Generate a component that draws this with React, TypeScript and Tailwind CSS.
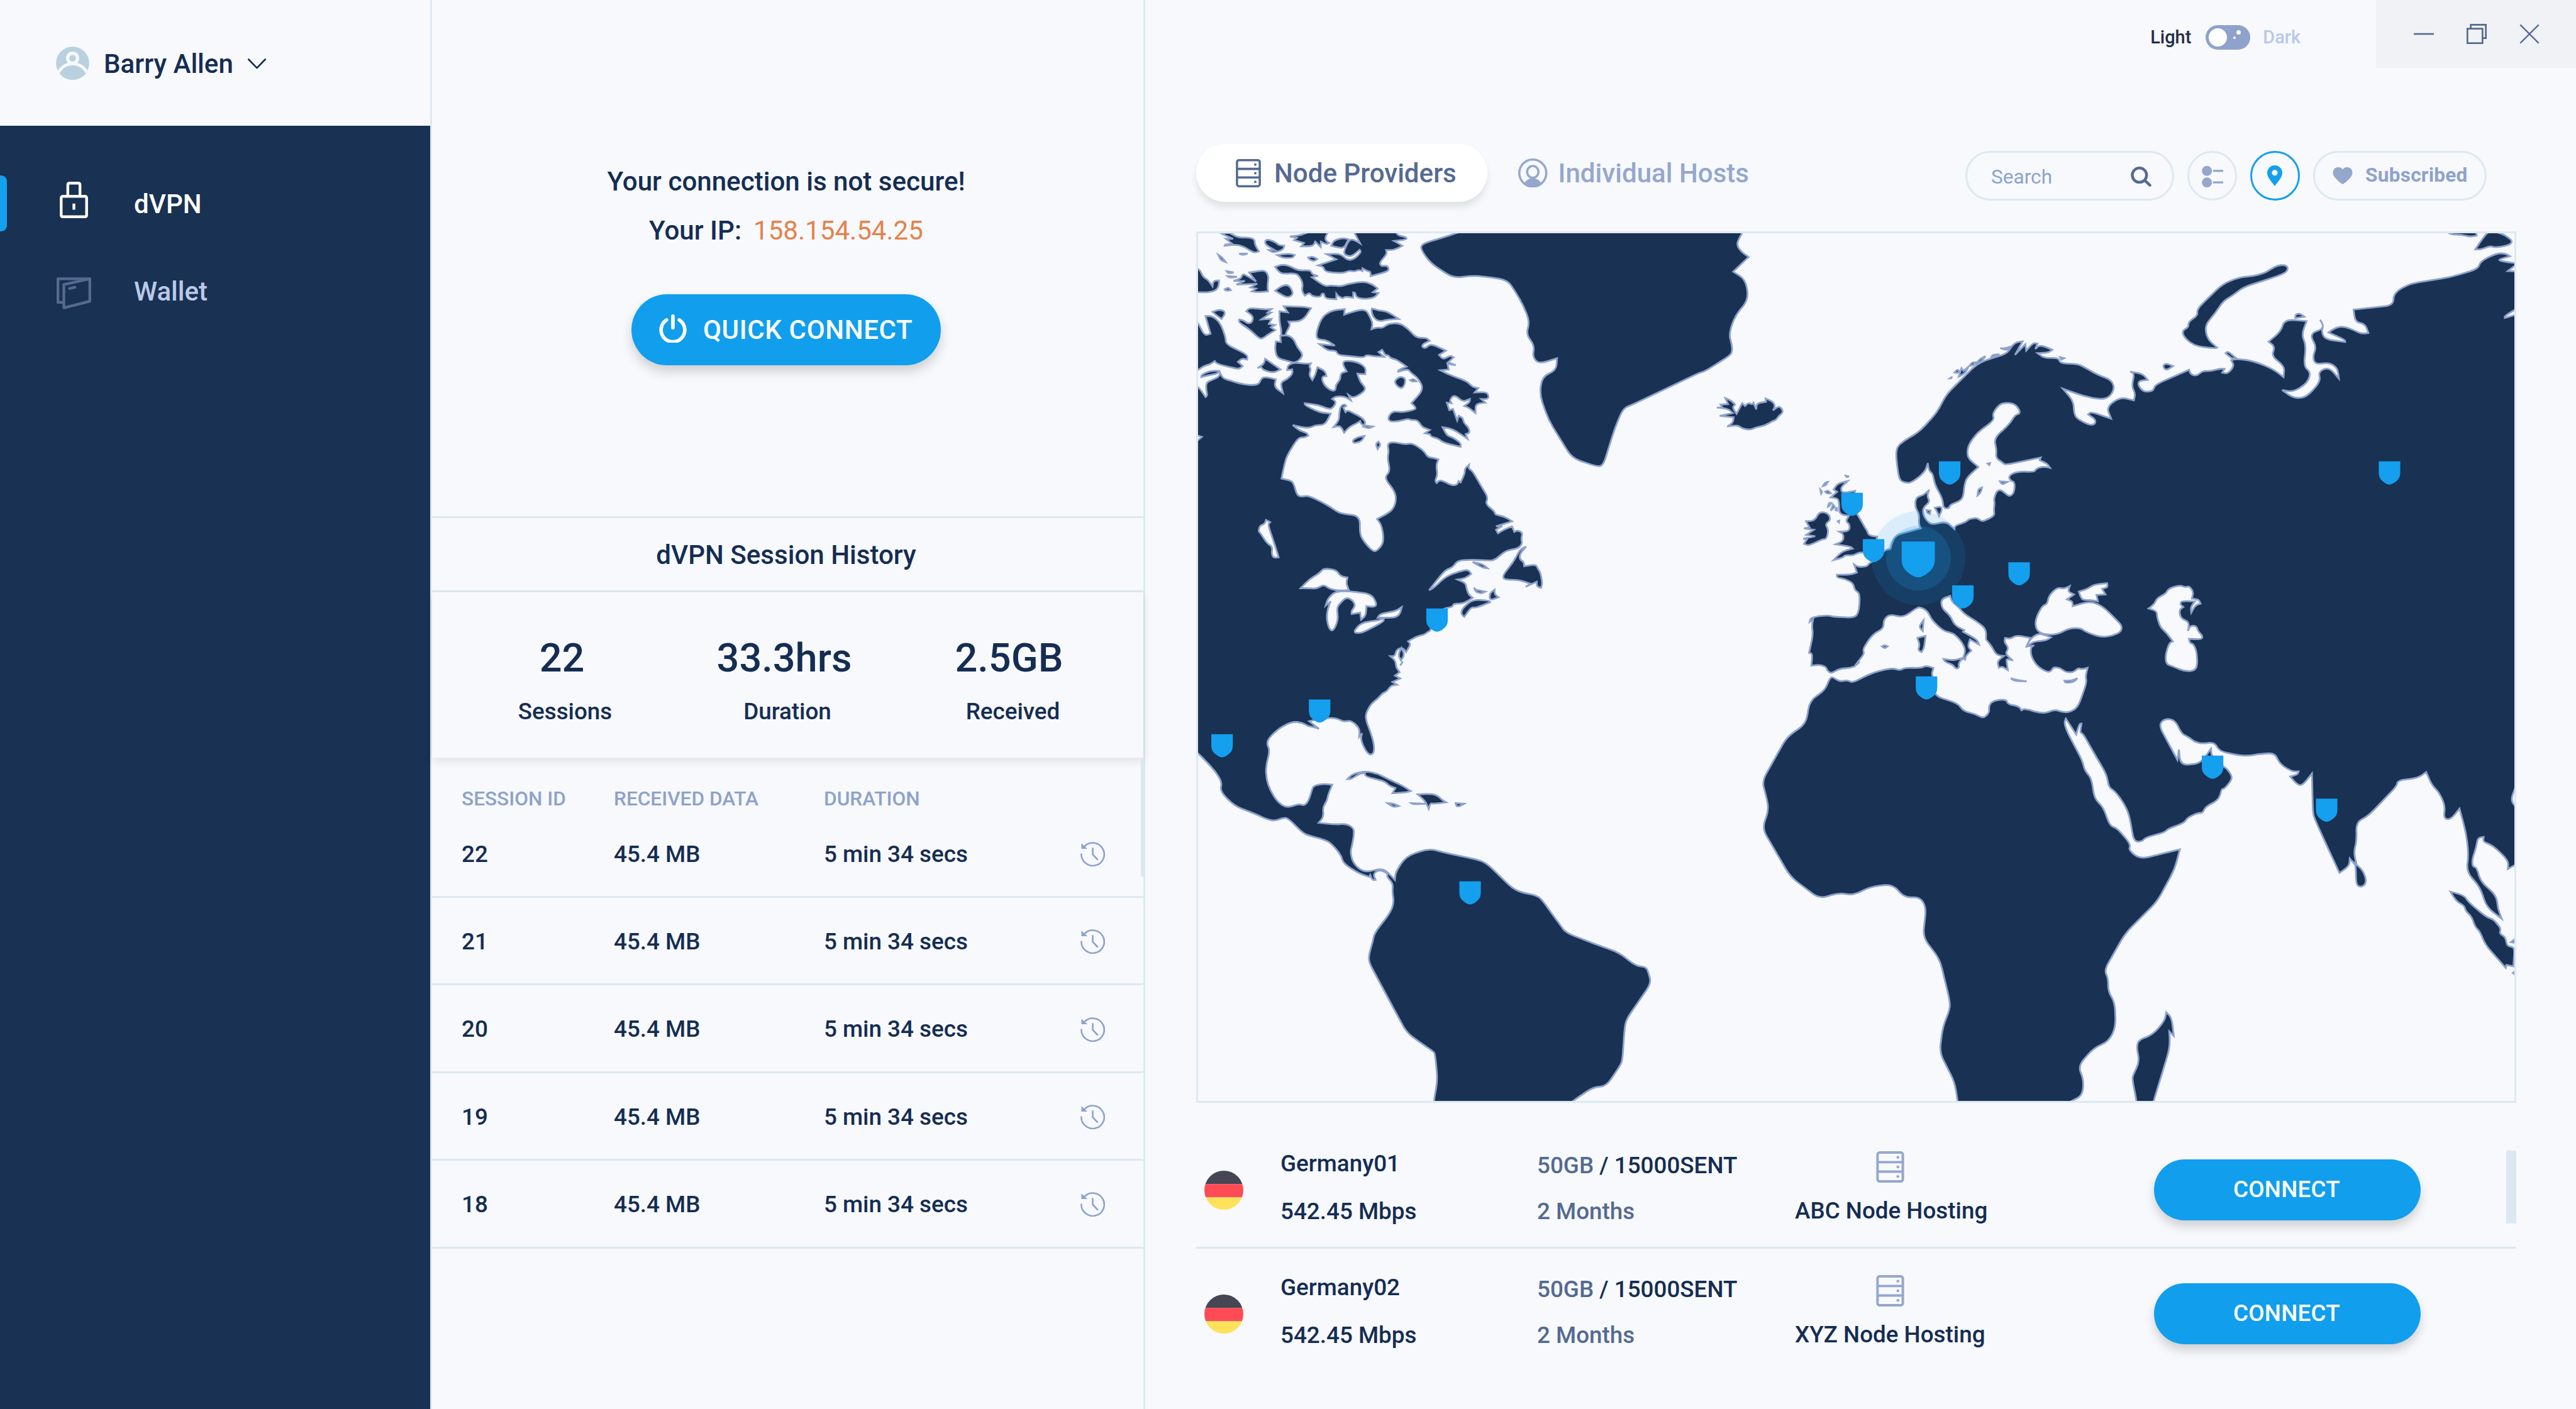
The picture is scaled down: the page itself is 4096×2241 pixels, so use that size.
import React from "react";

/* ---------- map geometry ---------- */

type Pt = [number, number];
type Sheet = (s: string) => Pt[];

// Coastlines are digitised sheet by sheet; each sheet has its own origin and scale.
const sheet =
  (ox: number, oy: number, sx: number, sy: number): Sheet =>
  (s) =>
    s
      .trim()
      .split(/\s+/)
      .map((p) => {
        const [x, y] = p.split(",").map(Number);
        return [ox + x * sx, oy + y * sy] as Pt;
      });

const A = sheet(2160, 410, 0.5102, 0.5102);
const B = sheet(2160, 1200, 0.574, 0.5166);
const C = sheet(3080, 410, 0.5102, 0.5102);
const D = sheet(3780, 410, 0.5102, 0.5102);
const E = sheet(3080, 1150, 0.5485, 0.5485);
const F = sheet(3720, 1150, 0.5485, 0.5485);

// Closed outline; gentle bends are rounded, sharp corners stay sharp.
const outline = (...parts: Pt[][]): string => {
  const pts = parts.flat();
  const n = pts.length;
  let d = "";
  for (let i = 0; i < n; i++) {
    const a = pts[(i + n - 1) % n];
    const p = pts[i];
    const b = pts[(i + 1) % n];
    const la = Math.hypot(a[0] - p[0], a[1] - p[1]) || 1;
    const lb = Math.hypot(b[0] - p[0], b[1] - p[1]) || 1;
    const dot = ((p[0] - a[0]) * (b[0] - p[0]) + (p[1] - a[1]) * (b[1] - p[1])) / (la * lb);
    const cmd = i === 0 ? "M" : "L";
    if (dot > 0.05) {
      const ra = Math.min(la * 0.48, 16) / la;
      const rb = Math.min(lb * 0.48, 16) / lb;
      const s = [p[0] + (a[0] - p[0]) * ra, p[1] + (a[1] - p[1]) * ra];
      const e = [p[0] + (b[0] - p[0]) * rb, p[1] + (b[1] - p[1]) * rb];
      d += `${cmd}${s[0].toFixed(1)} ${s[1].toFixed(1)}Q${p[0].toFixed(1)} ${p[1].toFixed(1)} ${e[0].toFixed(1)} ${e[1].toFixed(1)}`;
    } else {
      d += `${cmd}${p[0].toFixed(1)} ${p[1].toFixed(1)}`;
    }
  }
  return d + "Z";
};

const americas = outline(
  A(`-20,545 23,568 50,608 57,603 52,580 53,555 80,545 98,535 102,522 112,542 140,550 170,560 210,566 240,563 248,542 262,536 300,545
  294,572 326,595 318,565 322,553 340,545 360,525 358,510 340,512 343,495 365,485 405,490 425,488 418,500 425,508 418,530 430,548 440,530 448,502
  475,515 480,534 468,534 463,545 475,570 500,587 513,583 513,565 530,545 530,523 552,517 537,490 545,478 590,483 620,503 618,527
  590,525 600,555 620,575 610,592 575,612 558,600 567,620 548,608 530,605 510,607 500,615 515,625 505,645 490,652 450,635 403,630
  403,637 440,655 460,663 495,667 480,698 465,708 440,708 415,720 360,708 385,728 410,735 415,745 400,752 380,752 340,815 330,850
  320,898 355,905 365,920 375,957 392,963 415,958 470,985 500,1003 528,1023 600,1030 598,1095 615,1125 645,1157 660,1155 685,1125
  677,1065 660,1042 705,1018 722,998 728,970 722,942 685,895 707,872 697,828 702,800 697,775 715,767 760,777 785,772 825,798
  840,822 860,824 878,830 870,850 875,885 866,905 872,914 885,901 925,923 945,920 950,907 957,912 972,880 972,862 987,849
  985,862 1000,872 1030,925 1055,965 1045,988 1078,1015 1080,1027 1110,1032 1140,1050 1083,1068 1105,1067 1083,1080 1090,1093 1110,1080 1140,1068
  1148,1088 1158,1082 1178,1090 1172,1113 1177,1130 1160,1148 1118,1153 1080,1187 1060,1190 990,1186 945,1190 930,1213 905,1222
  880,1250 845,1295 862,1287 905,1245 965,1225 985,1223 995,1237 975,1252 945,1257 975,1270 977,1285 985,1310 1000,1322 975,1338
  955,1343 932,1343 928,1355 895,1360 860,1395 850,1440 840,1443 830,1452 800,1460 770,1477 780,1487 763,1515 752,1500 730,1505 723,1530
  707,1530 725,1545 728,1568`),
  B(`650,25 658,38 643,50 660,60 635,72 650,82 630,85 618,105 603,112 590,130 568,148 550,185 553,212 565,245 577,290
  577,320 565,330 550,313 535,275 539,252 530,265 532,235 505,207 480,212 465,202 440,197 395,204 372,210 388,224 403,237 385,230 370,228 350,215 320,211
  280,232 245,268 238,290 248,312 235,370 237,415 250,455 273,495 302,515 340,500 357,507 370,490 380,455 385,437 415,430
  445,433 432,468 428,490 415,512 418,545 402,567 455,573 490,570 512,585 514,605 508,645 502,670 510,705 530,730 555,740
  600,727 620,740 643,768 645,740 678,685 750,657 800,672 900,695 932,708 1015,798 1045,812 1092,822 1110,840 1135,880
  1165,925 1183,953 1300,1003 1350,1022 1405,1070 1437,1073 1445,1095 1453,1130 1373,1260 1368,1300 1362,1400 1355,1420
  1310,1493 1270,1495 1200,1548 1170,1580 764,1580 766,1545 778,1470 770,1380 765,1370 720,1337 680,1303 655,1252 560,1055
  562,1025 573,985 578,955 630,880 640,845 635,812 637,780 618,757 620,745 600,733 583,737 575,750 582,767 572,768
  565,750 563,757 530,745 480,710 473,680 440,637 417,625 375,613 352,603 305,550 290,549 265,560 240,555 200,535 135,507
  90,455 97,425 75,385 45,350 22,323 -20,290`),
);

const greenland = outline(
  A(`970,15 920,33 820,63 815,82 850,132 932,185 1000,176 1050,180 1123,192 1150,230 1180,282 1203,340 1190,385 1220,425
  1213,465 1235,490 1300,470 1297,513 1247,535 1238,600 1270,690 1353,825 1435,853 1463,855 1505,720 1535,648 1568,635`),
  C(`0,523 25,515 112,460 120,445 118,420 108,385 128,322 178,260 167,190 123,162 178,110 150,90 138,70 138,55 160,15`),
);

const eurasiaAfrica = outline(
  E(`438,132 425,120 422,110 403,102 373,105`),
  C(`405,1520 393,1518 407,1455 403,1420 407,1400 395,1408 398,1395 425,1387 465,1385 480,1390 555,1393 568,1375 573,1340
  572,1305 555,1295 550,1270 520,1255 492,1250 492,1240 540,1240 563,1232 553,1203 568,1213 600,1210 605,1200 625,1190 665,1150
  683,1150 685,1133 700,1100 745,1087 790,1075 783,1060 785,1025 770,1000 772,965 800,957 820,938 812,960 823,980 800,1000 797,1020
  808,1045 830,1063 880,1050 910,1078 912,1065 950,1053 960,1043 990,1037 1005,1050 1020,1047 1053,1030 1050,1010 1053,985 1050,970
  1060,942 1075,938 1090,950 1105,962 1122,950 1125,910 1107,905 1103,887 1135,872 1195,875 1200,863 1225,855 1250,860 1240,845 1213,833
  1217,823 1090,850 1080,840 1057,825 1060,795 1050,755 1105,705 1125,672 1143,667 1140,650 1120,630 1080,628 1060,645 1045,670 1052,690
  990,735 960,778 955,805 960,828 995,857 955,893 945,920 942,960 930,978 895,990 890,1005 870,1003 868,970 840,920 833,880
  820,872 815,843 805,875 757,913 735,913 713,903 702,820 705,785 735,760 785,732 850,660 880,600 920,560 990,490 1040,470
  1095,455 1115,425 1130,413 1152,410 1125,458 1162,420 1165,443 1190,415 1205,418 1197,437 1215,422 1258,440 1245,450 1205,452 1230,470 1280,468 1285,488
  1340,490 1360,495 1420,530 1465,545 1480,575 1462,608 1430,617 1370,605 1295,578 1333,622 1335,665 1345,685 1390,708 1410,705 1412,688
  1385,670 1395,660 1467,685 1450,643 1500,608 1548,620 1553,595 1540,570 1550,525 1535,518`),
  D(`207,525 225,547 195,550 190,565 210,590 245,587 250,565 372,511 378,528 400,533 420,515 450,516 480,507 498,508 490,521
  510,525 533,497 522,477 545,472 600,480 670,508 708,537 712,498 665,463 678,430 655,411 698,375 712,332 790,338 772,387 788,423
  780,500 805,520 793,558 743,590 703,583 735,607 765,613 795,603 840,552 832,517 870,502 905,543 900,505 870,485 820,492 812,463
  825,430 805,393 815,377 842,368 850,355 838,333 850,352 843,378 857,403 927,412 928,405 868,378 895,360 925,357 965,373 985,383 1010,380 997,347 963,341 957,297 1098,282
  1100,238 1155,205 1300,182 1400,152 1408,125 1465,97 1495,97 1513,107 1475,118 1475,124 1540,133 1505,160 1600,165`),
  F(`1600,500 1540,500 1532,515 1520,548 1532,570 1600,620 1600,740 1532,765 1510,778 1512,750 1460,700 1428,688 1430,672 1410,675 1405,708
  1392,745 1393,770 1407,773 1420,820 1472,865 1477,910 1490,943 1440,905 1418,838 1373,787 1380,730 1372,660 1350,578 1320,615
  1297,610 1303,570 1283,525 1258,500 1240,457 1212,477 1145,485 1143,503 1047,603 1008,623 1010,685 1000,722 1010,765 1003,762 987,743 985,768
  953,791 920,720 870,610 865,590 862,462 832,500 815,500 790,472 815,465 818,455 795,455 755,430 740,395 700,396 645,404
  610,400 555,388 540,358 500,363 475,358 455,342 430,330 410,285 375,280 355,302 417,417 422,383 427,433 475,432 500,420 528,380
  530,405 570,440 580,445 597,470 595,485 572,513 563,512 555,548 510,572 500,593 485,592 450,608 440,625 385,645 375,657
  312,673 300,687 273,688 258,600 240,560 210,520 190,508 183,465 150,410 105,330 95,327 100,297 93,297 82,333 48,280
  42,295 55,330 103,420 110,452 133,478 142,545 172,573 193,635 218,643 263,697 255,715 293,745 425,713 408,778 350,885
  245,990 175,1112 188,1140 188,1183 210,1220 213,1300 190,1348 140,1370 88,1430 107,1475 103,1528 60,1548 20,1580`),
  E(`860,1580 857,1545 847,1483 797,1385 808,1300 832,1240 830,1210 798,1077 742,1003 753,905 732,870 680,873 643,828
  570,836 510,865 465,856 400,877 303,803 210,643 233,582 222,530 210,487 293,340 355,298 368,220 418,187 433,148 443,142
  465,158 492,153 510,162 560,135 600,122 643,113 665,121 683,112 735,113 753,105 777,113 770,135 785,170 780,205 858,230 875,255
  915,265 942,280 962,260 960,240 970,224 1000,217 1020,220 1022,232 1060,240 1068,253 1078,247 1140,265 1178,250 1200,258
  1225,260 1255,243 1284,160 1280,140 1287,112 1268,117 1255,113 1240,127 1215,127 1195,112 1173,110 1165,125 1150,125 1120,107
  1100,75 1098,45 1110,38 1085,42`),
  C(`1180,1465 1130,1455 1110,1468 1090,1465 1087,1480 1103,1500 1090,1522 1118,1545 1097,1540`),
  E(`1018,87 1023,120 1005,108 993,112 988,90 1010,73 985,70 970,42 952,20`),
  C(`1022,1470 1023,1435 995,1410 945,1380 925,1355 900,1335 895,1315 862,1327 865,1360 895,1385 910,1420 945,1437 940,1443
  990,1470 997,1488 965,1470 957,1495 970,1510 950,1528 948,1542 940,1538 950,1508 935,1478 920,1462 905,1448 870,1440 828,1400 815,1370 790,1355 775,1358 728,1393
  680,1380 658,1400 658,1432 620,1450 583,1505 590,1520 570,1545 553,1568`),
  E(`533,92 512,112 465,115`),
);

const islands: string[] = [
  // Baffin
  outline(A(`445,373 465,322 500,300 545,295 543,315 600,297 622,300 632,318 645,345 640,367 660,360 680,363 700,347 740,345 770,365
  800,398 835,397 847,408 822,420 820,430 833,435 850,418 905,443 880,458 895,475 920,460 932,467 912,485 940,495 910,490 915,510
  885,513 920,530 980,552 1000,573 1020,576 1007,592 1045,590 1057,600 1055,615 1030,615 1045,628 1010,632 1010,665 985,645 970,640
  990,625 990,615 965,625 945,607 930,603 918,620 925,630 908,628 917,655 930,650 945,692 950,675 965,682 968,700 985,715 990,735 975,740
  982,757 930,722 893,715 908,745 930,752 958,772 957,785 895,770 880,757 850,748 850,740 830,737 848,725 820,715 805,690 780,690
  770,685 735,695 705,695 698,682 715,658 750,663 795,653 798,645 782,630 827,580 805,540 780,522 770,508 735,518 735,512 765,500
  730,475 708,470 700,458 690,460 678,440 665,448 685,465 650,463 620,458 615,468 560,462 520,458 515,443 485,443 455,420 510,425 490,412
  475,405 445,402`)),
  outline(A(`642,293 665,300 695,303 737,330 700,332 665,340 645,322 640,300`)),
  outline(A(`298,145 320,137 345,140 380,158 415,157 425,160 430,172 450,177 428,182 475,215 495,210 530,215 560,205 610,197 640,205
  662,222 645,235 665,238 650,255 610,260 585,252 583,237 575,236 575,255 545,250 540,258 523,250 515,240 515,260 475,258 472,240 463,240
  460,252 430,250 420,237 403,247 392,230 397,205 385,180 370,167 325,170 310,162`)),
  outline(A(`350,37 390,33 430,15 490,15 475,40 478,52 490,60 480,65 460,55 460,75 440,55 432,72 390,72 400,60 365,50 375,42`)),
  // Ellesmere
  outline(A(`575,15 600,62 578,48 560,48 541,92 548,104 570,108 598,84 604,92 580,117 555,122 530,98 480,100 515,118 450,140 470,145 475,163 540,168 560,158 580,162 595,155 608,160
  608,150 625,160 637,162 637,178 685,165 703,157 697,140 675,143 668,130 695,100 692,85 720,85 750,70 720,53 765,48 765,40 730,32 730,15`)),
  outline(A(`497,70 507,50 540,42 558,47 543,78 520,76`)),
  outline(A(`315,15 120,15 165,42 205,40 225,48 225,65 240,90 225,95 205,85 185,72 155,65 118,70 120,64 148,65 122,45 148,45 118,32 105,25`)),
  outline(A(`262,50 275,48 300,58 310,68 330,70 325,85 290,95 275,85 295,85 262,65`)),
  outline(A(`305,103 345,98 367,103 360,113 325,113`)),
  outline(A(`415,112 430,108 447,117 438,125 420,120`)),
  outline(A(`95,102 108,110 122,128 105,122`)),
  outline(A(`170,98 200,98 180,103`)),
  outline(A(`-10,150 28,150 40,180 60,192 75,215 78,195 98,193 97,215 85,230 50,237 -10,232`)),
  outline(A(`125,160 150,165 130,168`)),
  outline(A(`128,178 162,180 135,184`)),
  outline(A(`205,165 240,160 262,158 275,178 270,208 272,232 235,235 215,232 230,222 210,218 234,205 160,208 190,195 150,195 178,185 180,172 190,172 230,197`)),
  outline(A(`118,225 132,218 140,228 122,230`)),
  outline(A(`298,230 320,213 345,208 362,235 355,250 335,253`)),
  outline(A(`75,305 95,298 115,300 120,312 107,330 90,318`)),
  outline(A(`195,303 207,290 260,297 285,295 270,308 283,308 248,332 285,330 275,348 297,352 282,360 298,370 270,387 250,402 235,395 210,370
  168,342 170,332 185,335 200,347 215,343 220,325 210,313`)),
  outline(A(`328,285 400,287 425,292 395,338 345,340 352,352 333,385 340,390 318,402 320,370 313,340 313,303 343,307`)),
  outline(A(`316,390 318,412 300,410 297,440 305,470 345,480 370,488 400,460 375,430 365,403 345,388`)),
  outline(A(`262,472 317,510 290,522 255,512 248,500 235,505 258,490`)),
  outline(A(`720,553 740,535 760,540 760,560 750,577 735,573`)),
  outline(A(`778,548 790,543 800,552 785,553`)),
  outline(A(`573,762 592,750 615,747 605,765 577,773`)),
  outline(A(`655,775 665,767 673,777 662,793`)),
  outline(A(`35,530 65,515 98,515 92,525 60,530 35,537`)),
  outline(A(`-10,325 23,340 45,390 68,383 50,320 75,320 103,345 122,397 122,420 200,458 198,475 180,470 165,483 182,498 170,508 150,505
  90,490 83,480 65,492 45,497 23,512 -10,530`)),
  outline(A(`545,633 530,640 525,670 525,690 505,715 530,710 543,735 560,715 590,700 600,693 605,708 645,713 630,720 610,713 620,698 605,680
  575,665 555,655 548,662 540,645 550,640`)),
  outline(A(`1190,1140 1168,1150 1145,1195 1108,1240 1110,1258 1165,1258 1205,1272 1188,1283 1228,1265 1228,1282 1243,1287 1248,1270 1240,1230
  1232,1220 1225,1203 1183,1210 1182,1195 1167,1185 1168,1165`)),
  outline(A(`1000,1195 1035,1202 1053,1217 1035,1215`)),
  outline(A(`1005,1285 1008,1293 1045,1300 1030,1307 1010,1300`)),
  outline(A(`958,1378 965,1358 1000,1328 1060,1332 1062,1338 1010,1358 995,1355 970,1390`)),
  outline(A(`1060,1322 1062,1305 1078,1293 1078,1310 1092,1320 1065,1330`)),
  outline(A(`747,1500 758,1525 745,1545 735,1525`)),
  // Caribbean
  outline(B(`493,413 510,395 550,385 590,395 620,413 665,435 693,455 680,460 635,463 645,445 625,437 610,420 550,405 548,392 530,395 505,413`)),
  outline(B(`715,467 760,465 780,473 790,485 805,495 765,500 755,498 750,518 745,505 738,490`)),
  outline(B(`695,498 740,500 700,502`)),
  outline(B(`620,498 640,500 655,508 638,512`)),
  outline(B(`835,498 862,500 845,510 837,508`)),
  outline(B(`660,15 668,0`)),
  // Iceland, Britain, Ireland
  outline(C(`65,645 85,645 78,635 105,633 95,612 115,620 130,635 120,645 135,668 155,630 165,640 178,628 190,635 195,628 205,652 207,630
  240,625 238,613 265,625 272,640 265,655 285,640 297,650 300,663 285,675 275,690 265,692 235,710 205,715 185,725 155,720 140,708 102,713 122,700
  125,680 75,675 122,665 105,650`)),
  outline(C(`530,907 495,915 480,937 493,945 470,965 495,968 500,985 500,1025 535,1030 523,1050 537,1060 537,1085 500,1087 515,1095 515,1120
  487,1132 540,1140 548,1147 510,1157 480,1188 515,1178 520,1170 550,1172 570,1160 620,1162 635,1105 605,1100 600,1085 590,1070 565,1025
  545,1000 557,942 510,950 505,930`)),
  outline(C(`375,1075 395,1072 382,1050 413,1048 430,1015 462,1022 470,1045 450,1060 462,1080 455,1113 440,1113 392,1137 375,1130 385,1115
  372,1112 415,1103 383,1098 410,1080`)),
  outline(C(`442,925 450,912 460,910 452,922`)),
  outline(C(`433,937 440,945 436,952`)),
  outline(C(`450,945 460,940 470,950 458,952`)),
  outline(C(`523,888 535,890 526,893`)),
  outline(C(`460,998 463,985 472,985 466,995`)),
  outline(C(`470,1012 478,990 485,1000 474,1008`)),
  outline(C(`487,1010 492,1000 492,1012`)),
  outline(C(`495,1050 500,1048 499,1054`)),
  // Mediterranean
  outline(C(`783,1425 800,1402 797,1440`)),
  outline(C(`778,1465 790,1462 807,1458 802,1500 793,1515 780,1508 787,1490`)),
  outline(C(`652,1495 662,1490 672,1495 662,1502`)),
  outline(E(`810,83 845,88 878,78 860,95 862,113 850,115 842,103 815,92`)),
  outline(E(`1033,147 1055,153 1085,157 1045,156`)),
  outline(E(`1210,155 1235,155 1253,147 1240,160 1213,162`)),
  // Baltic
  outline(C(`992,958 995,935 1008,930 1003,948`)),
  outline(C(`1072,908 1098,910 1080,920`)),
  outline(C(`1028,845 1036,843 1034,850`)),
  outline(C(`840,1002 862,997 866,1010 855,1032 848,1015`)),
  outline(C(`810,1010 825,1012 822,1024 813,1020`)),
  // Norwegian skerries
  outline(C(`893,542 902,536 898,542`)),
  outline(C(`910,520 920,510 927,515 922,523`)),
  outline(C(`925,535 935,505 942,515 960,500 950,520 935,530`)),
  outline(C(`963,497 972,485 985,485 978,495`)),
  outline(C(`985,492 1000,472 1020,463 1005,482`)),
  outline(C(`1040,468 1045,458 1070,456`)),
  outline(C(`1073,434 1085,436 1112,428 1095,442`)),
  outline(C(`1285,466 1300,470 1290,475`)),
  // Arctic Russia
  outline(D(`685,140 660,155 640,167 600,178 550,182 490,207 400,295 403,318 370,340 370,360 350,370 350,388 375,415 405,428 465,435
  472,432 440,405 430,370 435,345 465,310 493,267 530,245 565,217 665,185 715,167 725,150 715,138`)),
  outline(D(`278,498 290,488 315,498 290,514`)),
  outline(D(`502,452 510,445 540,470 525,472`)),
  outline(D(`750,315 765,310 782,322 750,327`)),
  outline(D(`1280,10 1390,10 1395,34 1370,38 1340,30 1300,30`)),
  outline(D(`1440,15 1415,45 1390,83 1410,83 1443,70 1460,77 1510,68 1522,55 1510,42 1485,27`)),
  // Indian Ocean
  outline(F(`380,1252 398,1270 405,1330 390,1315 392,1350 388,1383 337,1550 330,1580 283,1580 282,1545 268,1475 270,1460 292,1415
  282,1370 288,1343 335,1327 375,1280`)),
  outline(F(`1320,853 1365,865 1380,888 1440,938 1460,943 1475,960 1487,975 1482,992 1502,1003 1507,1033 1525,1035 1532,1045 1528,1100 1505,1095
  1503,1105 1435,1028 1418,985 1402,970 1390,935 1370,917 1367,900 1340,885`)),
  outline(F(`1003,758 1007,770 1008,828 1020,838 1036,832 1042,815 1030,782`)),
  outline(F(`1520,1020 1530,1012 1535,1022`)),
  outline(F(`1526,1122 1536,1115 1536,1128`)),
];

const waters: string[] = [
  outline(A(`265,1045 280,1053 272,1062 285,1100 300,1145 310,1178 292,1180 285,1165 288,1140 270,1130 245,1092 238,1085 243,1065 260,1060`)),
  outline(A(`388,1288 420,1255 455,1235 470,1217 515,1223 530,1245 555,1250 550,1270 560,1295 525,1297 490,1290 470,1275 445,1290 415,1288`)),
  outline(A(`477,1350 485,1325 510,1300 555,1298 640,1308 660,1345 650,1355 622,1352 620,1385 603,1400 600,1375 570,1380 568,1370 583,1350
  573,1330 550,1320 525,1345 517,1360 522,1400 505,1440 490,1435 480,1395 485,1360 495,1335`)),
  outline(A(`578,1440 605,1410 660,1403 683,1397 685,1405 650,1425 605,1447 583,1447`)),
  outline(A(`662,1393 672,1378 725,1370 748,1355 742,1378 730,1390 710,1393`)),
  outline(A(`-10,735 37,750 23,762 -10,780`)),
  outline(C(`1197,1400 1222,1350 1240,1345 1245,1315 1275,1285 1300,1290 1320,1280 1313,1300 1335,1310 1310,1328 1330,1335 1330,1352
  1395,1333 1440,1355 1480,1395 1505,1420 1503,1443 1470,1458 1430,1462 1375,1443 1360,1430 1318,1430 1275,1453 1225,1453 1200,1435`)),
  outline(C(`1165,1497 1190,1478 1235,1474 1253,1463 1225,1452 1205,1450 1180,1468`)),
  outline(C(`1352,1300 1385,1290 1405,1275 1453,1270 1455,1285 1435,1290 1447,1310 1415,1312 1420,1335 1395,1330 1365,1330 1357,1315`)),
  outline(
    D(`228,1360 250,1343 258,1323 290,1307 298,1290 338,1277 360,1285 372,1280 388,1300 382,1325 407,1328 413,1343 395,1348 380,1375
  378,1355 393,1335 345,1333 340,1345 352,1355 337,1365 342,1395 373,1408 368,1440 375,1425 385,1420 400,1425 403,1440 420,1457 418,1470 372,1468
  375,1483 388,1487 400,1515`),
    F(`483,120 443,125 400,107 380,100 377,70 390,30 402,25`),
    D(`290,1445 270,1427 258,1390 258,1370`),
  ),
  outline(D(`1560,280 1493,320 1495,327 1560,308`)),
];

const pins: Pt[] = [
  [2586, 1104],
  [2373, 1269],
  [2196, 1332],
  [2646, 1599],
  [3339, 894],
  [3378, 978],
  [3516, 837],
  [3540, 1062],
  [3642, 1020],
  [4314, 837],
  [3474, 1227],
  [3993, 1371],
  [4200, 1449],
];

const SHIELD = "M0 0H39V20C39 26 37.5 30.5 34 34C30 38 24 42 19.5 42S9 38 5 34C1.5 30.5 0 26 0 20Z";

const WorldMap = () => (
  <svg viewBox="2172 423 2388 1575" preserveAspectRatio="none" className="block h-full w-full">
    <g fill="#193152" stroke="#8ea2cb" strokeWidth="3.2">
      <path d={americas} />
      <path d={greenland} />
      <path d={eurasiaAfrica} />
      {islands.map((d, i) => (
        <path key={i} d={d} />
      ))}
    </g>
    <g fill="#f7f9fd" stroke="#8ea2cb" strokeWidth="3.2">
      {waters.map((d, i) => (
        <path key={i} d={d} />
      ))}
    </g>
    <g fill="#149fef">
      <circle cx="3479" cy="1012.5" r="85.5" opacity="0.12" />
      <circle cx="3479" cy="1012.5" r="58.7" opacity="0.2" />
      <path d={SHIELD} transform="translate(3448.4 982.5) scale(1.544)" />
      {pins.map(([x, y]) => (
        <path key={`${x}-${y}`} d={SHIELD} transform={`translate(${x} ${y})`} />
      ))}
    </g>
  </svg>
);

/* ---------- icons ---------- */

type IconProps = { className?: string };

const AvatarIcon = ({ className }: IconProps) => (
  <svg viewBox="0 0 60 60" className={className}>
    <clipPath id="avatar-clip">
      <circle cx="30" cy="30" r="30" />
    </clipPath>
    <g clipPath="url(#avatar-clip)">
      <circle cx="30" cy="30" r="30" fill="#b9d0df" />
      <circle cx="30" cy="59.8" r="28.8" fill="#b9d0df" stroke="#f7f9fd" strokeWidth="5.5" />
      <circle cx="30" cy="21" r="9" fill="#b9d0df" stroke="#f7f9fd" strokeWidth="6" />
    </g>
  </svg>
);

const ChevronIcon = ({ className }: IconProps) => (
  <svg viewBox="0 0 33 19" fill="none" stroke="#152d52" strokeWidth="3" strokeLinecap="round" strokeLinejoin="round" className={className}>
    <path d="M1.5 1.5L16.5 17L31.5 1.5" />
  </svg>
);

const LockIcon = ({ className }: IconProps) => (
  <svg viewBox="0 0 51 66" fill="none" stroke="#fff" strokeWidth="5" className={className}>
    <rect x="2.5" y="26.5" width="46" height="37" rx="2.5" />
    <path d="M14.5 26V6Q14.5 2.5 18 2.5H33Q36.5 2.5 36.5 6V26M25.5 39.5V50.5" />
  </svg>
);

const WalletIcon = ({ className }: IconProps) => (
  <svg viewBox="0 0 63 58" fill="none" stroke="#566a90" strokeWidth="5" strokeLinejoin="round" className={className}>
    <path d="M12 45.5H2.5V2.5H60.5" />
    <path d="M13.2 13L60.5 2.5V43.5L13.2 55.5Z" />
    <path d="M23.5 20.3L33.5 18" strokeLinecap="round" />
  </svg>
);

const PowerIcon = ({ className }: IconProps) => (
  <svg viewBox="0 0 50 51" fill="none" stroke="#fff" strokeWidth="6.4" strokeLinecap="round" className={className}>
    <path d="M13.5 10A21.4 21.4 0 1 0 36.5 10M25 3.2V24" />
  </svg>
);

const HistoryIcon = ({ className }: IconProps) => (
  <svg viewBox="0 0 45 45" fill="none" stroke="#8ea2cb" strokeWidth="3" strokeLinecap="round" className={className}>
    <path d="M1.6 22.5A21 21 0 1 0 7.5 8.2M22.5 12V23L31 32" />
    <path d="M1.7 2.5L12.8 12.8H1.7Z" fill="#8ea2cb" stroke="none" />
  </svg>
);

const ServerIcon = ({ className }: IconProps) => (
  <svg viewBox="0 0 45 51" fill="none" stroke="currentColor" strokeWidth="4" className={className}>
    <rect x="2" y="2" width="41" height="47" rx="3.5" />
    <path d="M2 17.7H43M2 33.2H43" />
    <g fill="currentColor" stroke="none">
      <circle cx="35" cy="10" r="2.3" />
      <circle cx="35" cy="25.5" r="2.3" />
      <circle cx="35" cy="41" r="2.3" />
    </g>
  </svg>
);

const HostIcon = ({ className }: IconProps) => (
  <svg viewBox="0 0 53 53" fill="none" stroke="#95a7cd" strokeWidth="4" className={className}>
    <clipPath id="host-clip">
      <circle cx="26.5" cy="26.5" r="25" />
    </clipPath>
    <circle cx="26.5" cy="26.5" r="24.5" />
    <circle cx="26.5" cy="54" r="18" fill="#95a7cd" stroke="none" clipPath="url(#host-clip)" />
    <ellipse cx="26.5" cy="24.3" rx="10.3" ry="10.7" fill="#f7f9fd" />
  </svg>
);

const SearchIcon = ({ className }: IconProps) => (
  <svg viewBox="0 0 37 36" fill="none" stroke="#556a91" strokeWidth="5" strokeLinecap="round" className={className}>
    <circle cx="15.5" cy="15.2" r="12.8" />
    <path d="M25 24.5L34.2 33.3" />
  </svg>
);

const ListIcon = ({ className }: IconProps) => (
  <svg viewBox="0 0 40 39" className={className}>
    <g fill="#95a7cd">
      <circle cx="9.3" cy="9" r="9.2" />
      <circle cx="9.3" cy="30" r="9.2" />
      <rect x="20.5" y="7" width="18.5" height="3.8" />
      <rect x="20.5" y="28" width="18.5" height="3.8" />
    </g>
  </svg>
);

const PinIcon = ({ className }: IconProps) => (
  <svg viewBox="0 0 27 37" className={className}>
    <path
      fillRule="evenodd"
      fill="#149fef"
      d="M13.5 0A13.3 13.3 0 0 1 27 13.3C27 22 18 30 13.5 37C9 30 0 22 0 13.3A13.3 13.3 0 0 1 13.5 0ZM13.5 8A5.2 5.2 0 1 0 13.5 18.4A5.2 5.2 0 1 0 13.5 8Z"
    />
  </svg>
);

const HeartIcon = ({ className }: IconProps) => (
  <svg viewBox="0 0 36 31" className={className}>
    <path fill="#95a7cd" d="M18 4C14-1.5 5-1.5 1.6 4.5C-1.5 10.5 1 16 5 20C9 24 13.5 29 18 31C22.500 29 27 24 31 20C35 16 37.500 10.500 34.400 4.500C31-1.500 22-1.500 18 4Z" />
  </svg>
);

const GermanFlag = ({ className }: IconProps) => (
  <svg viewBox="0 0 60 60" className={className}>
    <clipPath id="flag-clip">
      <circle cx="30" cy="30" r="30" />
    </clipPath>
    <g clipPath="url(#flag-clip)">
      <rect width="60" height="20.500" fill="#464655" />
      <rect y="20.500" width="60" height="20.500" fill="#ff4b55" />
      <rect y="41" width="60" height="19" fill="#ffe15a" />
    </g>
  </svg>
);

/* ---------- panels ---------- */

const Sidebar = () => (
  <aside className="flex w-[684px] shrink-0 flex-col">
    <div className="flex h-[200px] items-center pl-[89px]">
      <AvatarIcon className="h-[53px] w-[53px]" />
      <span className="ml-[23px] pt-[3px] text-[42.1px] font-medium text-[#152d52]">Barry Allen</span>
      <ChevronIcon className="ml-[23px] mt-[2px] h-[17px] w-[29px]" />
    </div>
    <nav className="flex flex-1 flex-col bg-[#193152] pt-[54px]">
      <a className="flex h-[139.400px] items-center">
        <span className="h-[89px] w-[11px] rounded-r-[9px] bg-[#149fef]" />
        <span className="ml-[78px] flex w-[56px] justify-center">
          <LockIcon className="-mt-[12px] h-[58px] w-[45px]" />
        </span>
        <span className="ml-[68px] pt-[2px] text-[42.1px] font-medium text-white">dVPN</span>
      </a>
      <a className="flex h-[139.400px] items-center pl-[89px]">
        <span className="flex w-[56px] justify-center pt-[6px]">
          <WalletIcon className="h-[51px] w-[55px]" />
        </span>
        <span className="ml-[68px] pt-[1px] text-[42.1px] font-medium text-[#b9c9e9]">Wallet</span>
      </a>
    </nav>
  </aside>
);

const sessions = ["22", "21", "20", "19", "18"];

const SessionPanel = () => (
  <section className="relative flex w-[1137px] shrink-0 flex-col border-x-[3px] border-[#dde9f0] text-[#152d52]">
    <div className="flex h-[821px] flex-col items-center pr-[5px] pt-[259px]">
      <p className="text-[42.1px] font-medium leading-[60px]">Your connection is not secure!</p>
      <p className="mt-[18px] flex text-[42.1px] leading-[60px]">
        <span className="font-medium">Your IP:</span>
        <span className="ml-[19px] text-[#e4824a]">158.154.54.25</span>
      </p>
      <button className="mt-[71px] flex h-[113px] w-[492px] items-center rounded-full bg-[#119eed] pl-[44px] shadow-[0_10px_18px_rgba(0,0,0,0.17)]">
        <PowerIcon className="-mt-[4px] h-[45px] w-[44px]" />
        <span className="ml-[26px] text-[42.1px] font-medium tracking-[0.6px] text-white">QUICK CONNECT</span>
      </button>
    </div>
    <h2 className="flex h-[121px] items-center justify-center border-y-[3px] border-[#dde9f0] pr-[5px] pt-[2px] text-[42.1px] font-medium">
      dVPN Session History
    </h2>
    <div className="flex h-[263px] pl-[35px] pt-[67px] text-center font-medium shadow-[0_6px_14px_rgba(0,0,0,0.09)]">
      <div className="w-[353px]">
        <div className="mr-[10px] text-[63.1px] leading-[74px]">22</div>
        <div className="mt-[27px] text-[36.8px] leading-[44px]">Sessions</div>
      </div>
      <div className="w-[354px]">
        <div className="mr-[10px] text-[63.1px] leading-[74px]">33.3hrs</div>
        <div className="mt-[27px] text-[36.8px] leading-[44px]">Duration</div>
      </div>
      <div className="w-[363px]">
        <div className="mr-[12px] text-[63.1px] leading-[74px]">2.5GB</div>
        <div className="mt-[27px] text-[36.8px] leading-[44px]">Received</div>
      </div>
    </div>
    <div className="relative">
      <span className="absolute -right-[1px] top-0 h-[189px] w-[5px] bg-[#dbe8f0]" />
      <div className="grid h-[83.600px] grid-cols-[242px_334px_1fr] pl-[47px] pt-[46px] text-[31.6px] font-medium leading-[40px] text-[#8ea2cb]">
        <span>SESSION ID</span>
        <span>RECEIVED DATA</span>
        <span>DURATION</span>
      </div>
      {sessions.map((id) => (
        <div
          key={id}
          className="grid h-[139.400px] grid-cols-[242px_334px_1fr_39px] items-center border-b-[3px] border-[#dde9f0] pl-[47px] pr-[61px] pt-[3px] text-[36.8px] font-medium"
        >
          <span>{id}</span>
          <span>45.4 MB</span>
          <span>5 min 34 secs</span>
          <HistoryIcon className="h-[39px] w-[39px]" />
        </div>
      ))}
    </div>
  </section>
);

const TopBar = () => (
  <div className="flex h-[108px] justify-end">
    <div className="mr-[120px] flex items-center pt-[11px] text-[28.9px] font-medium">
      <span className="text-[#232d45]">Light</span>
      <span className="relative ml-[23px] flex h-[39.500px] w-[71px] items-center rounded-full bg-[#8ea2cb] pl-[5px]">
        <span className="h-[29px] w-[29px] rounded-full bg-white" />
        <span className="absolute left-[49px] top-[8px] h-[7px] w-[7px] rounded-full bg-white" />
        <span className="absolute left-[44px] top-[18px] h-[4px] w-[4px] rounded-full bg-white" />
      </span>
      <span className="ml-[20px] text-[#b9c9e9]">Dark</span>
    </div>
    <div className="flex w-[318px] items-center gap-[52px] bg-[#f1f2f5] pl-[60px]">
      <svg viewBox="0 0 36 36" className="h-[32px] w-[32px]" fill="none" stroke="#556a91" strokeWidth="3">
        <path d="M0 18H36" />
      </svg>
      <svg viewBox="0 0 36 36" className="h-[32px] w-[32px]" fill="none" stroke="#556a91" strokeWidth="3">
        <path d="M7.500 8V1.500H34.500V25.500H29M1.500 8.500H28.500V34.500H1.500Z" />
      </svg>
      <svg viewBox="0 0 36 36" className="h-[32px] w-[32px]" fill="none" stroke="#556a91" strokeWidth="2.6">
        <path d="M1.500 1.500L34.500 34.500M34.500 1.500L1.500 34.500" />
      </svg>
    </div>
  </div>
);

const Toolbar = () => (
  <div className="mt-[121px] flex h-[92px] items-center pl-[81px] pr-[142px]">
    <button className="flex h-[92px] w-[463px] items-center rounded-full bg-white pl-[63px] text-[#556a91] shadow-[0_9px_11px_rgba(0,0,0,0.09)]">
      <ServerIcon className="h-[45px] w-[40px]" />
      <span className="ml-[21px] whitespace-nowrap pt-[1px] text-[42.1px] font-medium">Node Providers</span>
    </button>
    <button className="ml-[49px] flex items-center text-[#95a7cd]">
      <HostIcon className="h-[46.500px] w-[46.500px]" />
      <span className="ml-[17px] whitespace-nowrap pt-[1px] text-[42.1px] font-medium">Individual Hosts</span>
    </button>
    <div className="ml-auto flex items-center gap-[21px] pt-[8px]">
      <div className="flex h-[79px] w-[332px] items-center justify-between rounded-full border-[3px] border-[#dde9f0] pl-[38px] pr-[33px]">
        <span className="pt-[5px] text-[31.6px] text-[#8ea2cb]">Search</span>
        <SearchIcon className="mt-[4px] h-[32px] w-[33px]" />
      </div>
      <div className="flex h-[79px] w-[79px] items-center justify-center rounded-full border-[3px] border-[#dde9f0]">
        <ListIcon className="ml-[1px] mt-[3px] h-[34px] w-[35px]" />
      </div>
      <div className="flex h-[79px] w-[79px] items-center justify-center rounded-full border-[3px] border-[#149fef]">
        <PinIcon className="mr-[1px] h-[33px] w-[24px]" />
      </div>
      <div className="flex h-[79px] w-[276px] items-center rounded-full border-[3px] border-[#dde9f0] pl-[28px]">
        <HeartIcon className="h-[27px] w-[32px]" />
        <span className="ml-[20px] text-[31.6px] font-bold tracking-[0.25px] text-[#8ea2cb]">Subscribed</span>
      </div>
    </div>
  </div>
);

const nodes = [
  { name: "Germany01", host: "ABC Node Hosting" },
  { name: "Germany02", host: "XYZ Node Hosting" },
];

const NodeList = () => (
  <div className="relative ml-[81px] mt-[34px] w-[2099px]">
    <span className="absolute right-0 top-[42px] h-[116px] w-[16px] bg-[#dbe8f0]" />
    {nodes.map((node, i) => (
      <div
        key={node.name}
        className={
          "grid h-[197.300px] grid-cols-[134px_408px_410px_571px_424px] items-center border-b-[3px] pt-[13px] text-[36.8px] font-medium leading-[44px] text-[#152d52] " +
          (i === 0 ? "border-[#dde9f0]" : "border-transparent")
        }
      >
        <GermanFlag className="ml-[13px] mt-[1px] h-[62px] w-[62px]" />
        <div className="mb-[7px] flex flex-col gap-[32px]">
          <span>{node.name}</span>
          <span>542.45 Mbps</span>
        </div>
        <div className="mb-[4px] flex flex-col gap-[29px]">
          <span>
            <span className="text-[#556a91]">50GB</span> / 15000SENT
          </span>
          <span className="text-[#556a91]">2 Months</span>
        </div>
        <div className="mb-[5px] flex flex-col">
          <ServerIcon className="ml-[129px] h-[50px] w-[45px] text-[#95a7cd]" />
          <span className="mt-[23px]">{node.host}</span>
        </div>
        <button className="h-[97px] rounded-full bg-[#119eed] pr-[2px] tracking-[0.25px] text-white shadow-[0_10px_16px_rgba(0,0,0,0.16)]">
          CONNECT
        </button>
      </div>
    ))}
  </div>
);

export default function App() {
  return (
    <div className="flex h-[2241px] w-[4096px] overflow-hidden bg-[#f7f9fd] font-['Roboto',sans-serif]">
      <Sidebar />
      <SessionPanel />
      <main className="flex min-w-0 flex-1 flex-col">
        <TopBar />
        <Toolbar />
        <div className="ml-[81px] mt-[47px] h-[1386.400px] w-[2099px] border-[3px] border-[#dde9f0]">
          <WorldMap />
        </div>
        <NodeList />
      </main>
    </div>
  );
}
